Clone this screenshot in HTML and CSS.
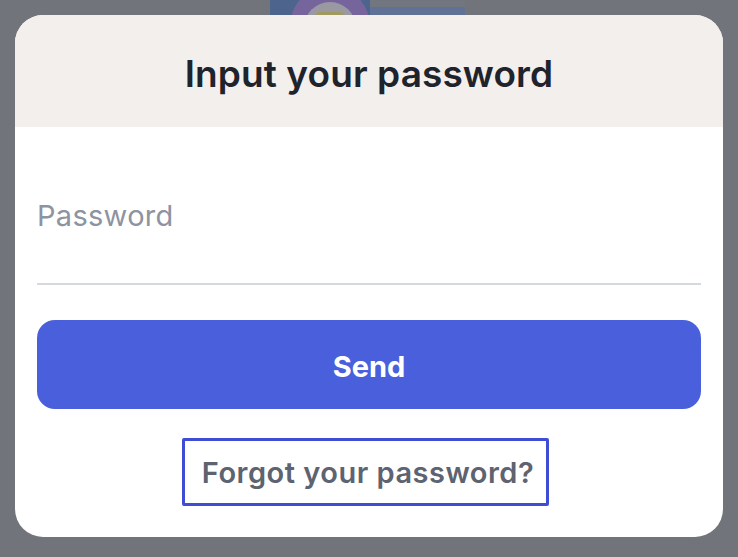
FILE: index.html
```html
<!DOCTYPE html>
<html lang="en">

<head>
  <meta charset="UTF-8">
  <meta name="viewport" content="width=device-width, initial-scale=1.0">
  <title>Input your password</title>
  <link rel="stylesheet" href="styles.css">
</head>

<body>
  <!-- app content peeking out behind the sheet -->
  <svg class="backdrop-art" width="220" height="24" viewBox="0 0 220 24">
    <rect x="10" y="0" width="195" height="24" fill="#4d648c" />
    <rect x="110" y="0" width="95" height="7" fill="#72767e" />
    <rect x="110" y="7" width="95" height="17" fill="#5f7196" />
    <circle cx="70" cy="26" r="40" fill="#76659c" />
    <circle cx="70" cy="28" r="26" fill="#9a99a2" />
    <rect x="56" y="12" width="28" height="14" rx="4" fill="#a19a5e" />
  </svg>

  <div class="sheet">
    <div class="sheet-header">
      <h2>Input your password</h2>
    </div>
    <form class="sheet-body" id="password-form">
      <div class="field">
        <input type="password" id="password" placeholder="Password">
      </div>
      <button type="submit" class="send-btn">Send</button>
      <div class="forgot-row">
        <span class="forgot-link">Forgot your password?</span>
      </div>
    </form>
  </div>
</body>

</html>
```

FILE: styles.css
```css
body {
  font-family: 'Inter', 'Noto Sans', sans-serif;
  margin: 0;
  padding: 15px;
  background: #71747b;
  position: relative;
  height: 557px;
  box-sizing: border-box;
  overflow: hidden;
}

.backdrop-art {
  position: absolute;
  left: 260px;
  top: 0;
}

.sheet {
  position: relative;
  background: #fff;
  border-radius: 28px;
  overflow: hidden;
}

.sheet-header {
  background: #f2efed;
  height: 112px;
  box-sizing: border-box;
  padding-top: 4px;
  display: flex;
  justify-content: center;
  align-items: center;
}

.sheet-header h2 {
  margin: 0;
  font-size: 37px;
  font-weight: 600;
  color: #1f232b;
  letter-spacing: 0.1px;
}

.sheet-body {
  display: flex;
  flex-direction: column;
  padding: 48px 22px 31px;
}

.field {
  padding-bottom: 28px;
  border-bottom: 2px solid #d6d8df;
}

.field input {
  display: block;
  width: 100%;
  height: 80px;
  padding: 0;
  border: none;
  outline: none;
  background: transparent;
  font-family: inherit;
  font-size: 29px;
  letter-spacing: 0.3px;
  color: #1f232b;
}

.field input::placeholder {
  color: #8d93a0;
}

.send-btn {
  margin-top: 35px;
  height: 89px;
  padding-top: 4px;
  border: none;
  border-radius: 18px;
  background: #4a5fdb;
  color: #fff;
  font-family: inherit;
  font-size: 29px;
  font-weight: 700;
  cursor: pointer;
}

.forgot-row {
  margin-top: 29px;
  margin-right: 7px;
  display: flex;
  justify-content: center;
}

.forgot-link {
  box-sizing: border-box;
  width: 367px;
  height: 68px;
  padding-left: 5px;
  border: 3px solid #3f4cd4;
  border-radius: 2px;
  display: flex;
  justify-content: center;
  align-items: center;
  font-size: 29px;
  font-weight: 600;
  letter-spacing: 0.5px;
  color: #5d6370;
  cursor: pointer;
}
```
